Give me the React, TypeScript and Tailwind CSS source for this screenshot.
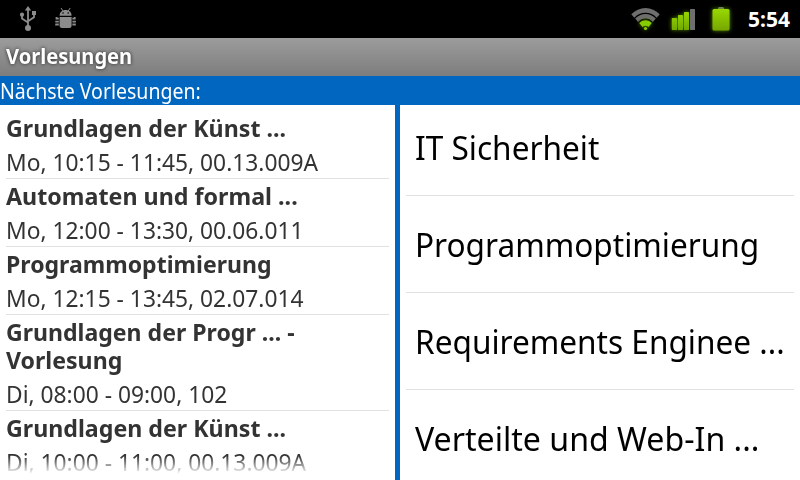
type Lecture = { title: { text: string; fit: string }[]; detail: string };

const lectures: Lecture[] = [
  { title: [{ text: "Grundlagen der Künst ...", fit: "scale-x-[0.966]" }], detail: "Mo, 10:15 - 11:45, 00.13.009A" },
  { title: [{ text: "Automaten und formal ...", fit: "scale-x-[0.969]" }], detail: "Mo, 12:00 - 13:30, 00.06.011" },
  { title: [{ text: "Programmoptimierung", fit: "scale-x-[0.96]" }], detail: "Mo, 12:15 - 13:45, 02.07.014" },
  {
    title: [
      { text: "Grundlagen der Progr ... -", fit: "scale-x-[0.961]" },
      { text: "Vorlesung", fit: "scale-x-[0.963]" },
    ],
    detail: "Di, 08:00 - 09:00, 102",
  },
  { title: [{ text: "Grundlagen der Künst ...", fit: "scale-x-[0.966]" }], detail: "Di, 10:00 - 11:00, 00.13.009A" },
];

const courses = [
  { text: "IT Sicherheit", fit: "scale-x-[0.957]" },
  { text: "Programmoptimierung", fit: "scale-x-[0.957]" },
  { text: "Requirements Enginee ...", fit: "scale-x-[0.957]" },
  { text: "Verteilte und Web-In ...", fit: "scale-x-[0.973]" },
];

function UsbIcon() {
  return (
    <svg width="18" height="26" viewBox="19 6 18 26" fill="#8c8c8c">
      <path d="M28 6l3.2 4.6h-6.4z" />
      <path d="M28 9v18M22 15v3.6l6 4M34 14v3.2l-6 4" fill="none" stroke="#8c8c8c" strokeWidth="1.8" />
      <circle cx="22" cy="14.7" r="2.1" />
      <path d="M32 11h4v4h-4z" />
      <circle cx="28" cy="28" r="3" />
    </svg>
  );
}

function DebugIcon() {
  return (
    <svg width="22" height="22" viewBox="55 7 22 22" fill="#8c8c8c">
      <path d="M61 8l2 3M70.200 8l-2 3" stroke="#8c8c8c" strokeWidth="1" />
      <path d="M59.600 15.700c0-3.500 2.600-5.700 6-5.700s6 2.200 6 5.700z" />
      <circle cx="63" cy="13" r=".8" fill="#000" />
      <circle cx="68.200" cy="13" r=".8" fill="#000" />
      <path d="M59.600 17h12v8.500a2.500 2.500 0 0 1-2.500 2.500h-7a2.500 2.500 0 0 1-2.500-2.500z" />
      <path
        d="M58.800 18.700h-2.300v-1.700M58.800 21.700h-3.500M58.800 24.500h-2.500v-1M56 25.500v-1M72.400 18.700h2.300v-1.700M72.400 21.700h3.500M72.400 24.500h2.500v1"
        fill="none"
        stroke="#8c8c8c"
        strokeWidth="1.800"
      />
    </svg>
  );
}

function WifiIcon() {
  return (
    <svg className="overflow-visible" width="30" height="24" viewBox="631 7 30 24">
      <path d="M631.300 14.200a19.500 19.500 0 0 1 28.400 0l-3 3.500a15 15 0 0 0-22.400 0z" fill="#6e6e6e" />
      <path d="M635.200 18.600a13.800 13.800 0 0 1 20.600 0l-2.900 3.300a9.600 9.600 0 0 0-14.800 0z" fill="#6e6e6e" />
      <g className="drop-shadow-[0_0_2px_#5c9200]">
        <path d="M639.200 23a8.400 8.400 0 0 1 12.600 0l-3.300 4a4.200 4.200 0 0 0-6 0z" fill="#86cc00" />
        <circle cx="645.500" cy="28.500" r="1.600" fill="#86cc00" />
      </g>
    </svg>
  );
}

function SignalIcon() {
  return (
    <svg className="overflow-visible" width="24" height="22" viewBox="671 9 24 22">
      <defs>
        <linearGradient id="bars" x1="0" y1="9" x2="0" y2="30" gradientUnits="userSpaceOnUse">
          <stop stopColor="#9be000" />
          <stop offset="1" stopColor="#72a800" />
        </linearGradient>
      </defs>
      <g fill="url(#bars)" className="drop-shadow-[0_0_2px_#5c9200]">
        <rect x="671.800" y="18" width="5.200" height="12" rx=".6" />
        <rect x="678" y="15" width="5" height="15" rx=".6" />
        <rect x="684" y="12" width="5" height="18" rx=".6" />
      </g>
      <rect x="690" y="9" width="5" height="21" rx=".6" fill="#6e6e6e" />
    </svg>
  );
}

function BatteryIcon() {
  return (
    <svg className="overflow-visible" width="18" height="24" viewBox="712 7 18 24">
      <defs>
        <linearGradient id="cell" x1="0" y1="0" x2="0" y2="1">
          <stop stopColor="#98d800" />
          <stop offset="1" stopColor="#76a600" />
        </linearGradient>
      </defs>
      <path d="M718 9V8l1-1h4l1 1v1z" fill="#777" />
      <rect x="712.500" y="9" width="17" height="21.500" rx="1.500" fill="url(#cell)" className="drop-shadow-[0_0_2px_#5c9200]" />
    </svg>
  );
}

export default function App() {
  return (
    <div className="flex h-[480px] w-[800px] flex-col overflow-hidden bg-white font-['Noto_Sans','Open_Sans',sans-serif] whitespace-nowrap">
      <header className="flex h-[38px] shrink-0 items-start justify-between bg-black pr-2.5 pl-[19px]">
        <div className="flex gap-[18px] pt-1.5">
          <UsbIcon />
          <div className="pt-px"><DebugIcon /></div>
        </div>
        <div className="flex pt-[7px]">
          <WifiIcon />
          <div className="mt-0.5 ml-2.5"><SignalIcon /></div>
          <div className="ml-[17px]"><BatteryIcon /></div>
          <span className="ml-[18px] w-[42px] origin-left text-[21px] leading-[25px] font-bold text-white">5:54</span>
        </div>
      </header>

      <div className="h-[38px] shrink-0 bg-linear-to-b from-[#9c9c9c] to-[#7d7d7d] pl-1.5">
        <h1 className="inline-block origin-left scale-x-[0.957] text-[21px] leading-[37px] font-bold text-white [text-shadow:0_0_4px_#222]">
          Vorlesungen
        </h1>
      </div>

      <div className="h-[29px] shrink-0 bg-[#0066bf]">
        <span className="inline-block origin-left scale-x-[0.93] text-[21px] leading-[30px] text-white">Nächste Vorlesungen:</span>
      </div>

      <main className="flex min-h-0 flex-1">
        <section className="w-[395px] shrink-0 p-1.5">
          <ul className="h-[363px] overflow-hidden pr-0 text-2xl leading-7 text-[#333] [mask-image:linear-gradient(to_bottom,#000_345px,transparent_363px)]">
            {lectures.map((lecture, i) => (
              <li key={i} className={`mr-[-1px] w-[384px] border-b border-[#e1e1e1] pb-0.5 ${i === 0 ? "pt-[3px]" : "pt-[3px]"}`}>
                <h2 className="font-bold">
                  {lecture.title.map((line) => (
                    <span key={line.text} className={`block w-max origin-left ${line.fit}`}>{line.text}</span>
                  ))}
                </h2>
                <p className="w-max origin-left scale-x-[0.949] pt-1.5">{lecture.detail}</p>
              </li>
            ))}
          </ul>
        </section>

        <div className="w-[5px] shrink-0 bg-[#0066bf]" />

        <section className="min-w-0 flex-1 overflow-hidden px-1.5">
          <ul className="-mt-1.5 text-[33px] text-black">
            {courses.map((course) => (
              <li key={course.text} className="h-[97px] border-b border-[#e1e1e1] pl-[9px] leading-[98px] last:border-0">
                <span className={`block w-max origin-left ${course.fit}`}>{course.text}</span>
              </li>
            ))}
          </ul>
        </section>
      </main>
    </div>
  );
}
